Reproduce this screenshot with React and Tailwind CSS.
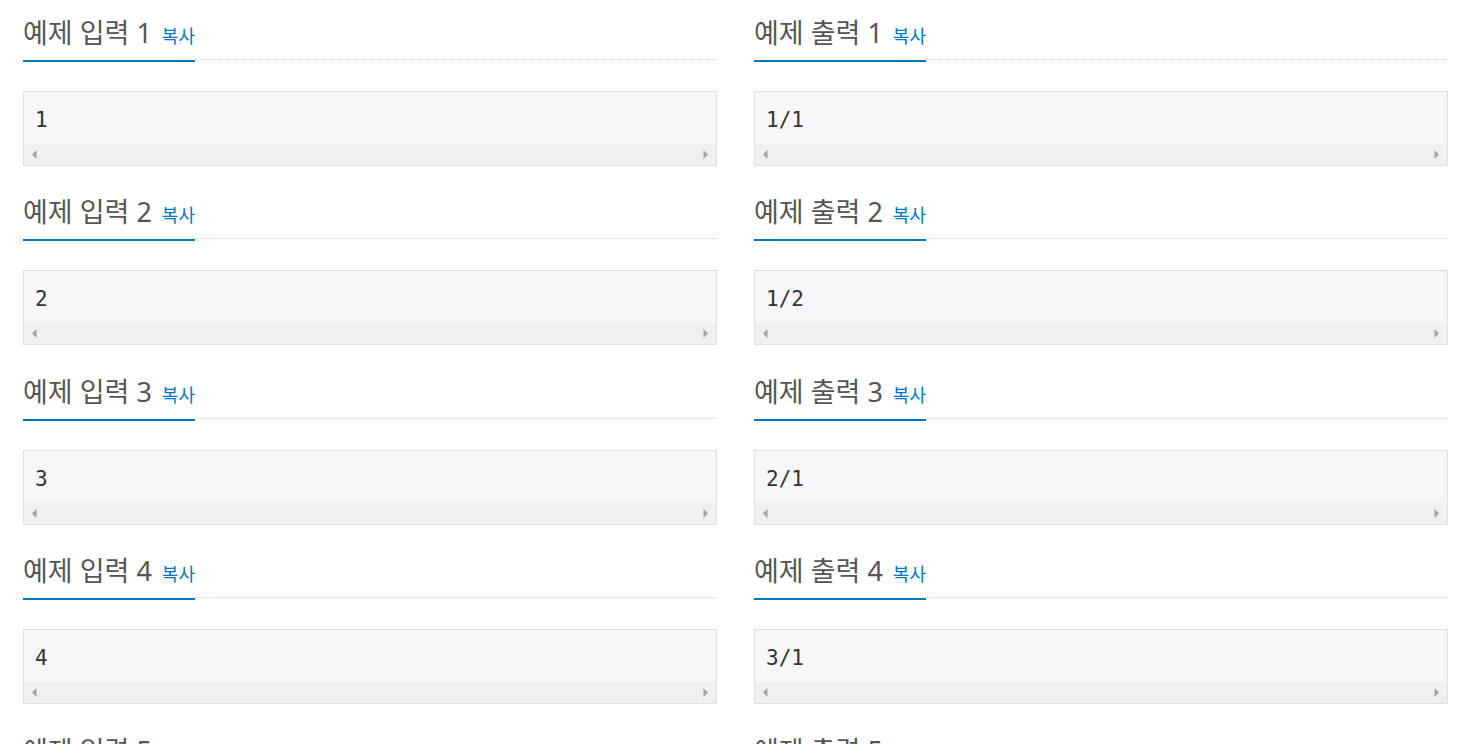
import React from "react";

const samples = [
  { n: 1, input: "1", output: "1/1" },
  { n: 2, input: "2", output: "1/2" },
  { n: 3, input: "3", output: "2/1" },
  { n: 4, input: "4", output: "3/1" },
  { n: 5, input: "5", output: "2/2" },
];

const Headline = ({ title }) => (
  <div className="flex items-end">
    <h2 className="pt-[15px] pb-[9px] border-b-2 border-[#0076c0] text-[27px] leading-[36px] text-[#555] font-normal whitespace-nowrap">
      {title}
      <a className="ml-[10px] text-[18px] leading-none text-[#0076c0] cursor-pointer">복사</a>
    </h2>
    <div className="flex-1 mb-[2px] border-b border-dotted border-[#d5d5d5]" />
  </div>
);

// fake horizontal scrollbar under the sample
const ScrollBar = () => (
  <div className="h-[21px] bg-[#f0f0f0] flex items-center justify-between px-[8px]">
    <svg width="5" height="9" viewBox="0 0 5 9">
      <path d="M4.5 0 L0 4.5 L4.5 9 Z" fill="#a3a3a3" />
    </svg>
    <svg width="5" height="9" viewBox="0 0 5 9">
      <path d="M0.5 0 L5 4.5 L0.5 9 Z" fill="#a3a3a3" />
    </svg>
  </div>
);

const Sample = ({ title, text }) => (
  <div className="w-[694px]">
    <Headline title={title} />
    <div className="mt-[29px] border border-[#dedee3] bg-[#f7f7f9]">
      <pre
        className="px-[11px] pt-[14px] pb-[10px] text-[21px] leading-[28px] text-[#333]"
        style={{ fontFamily: '"DejaVu Sans Mono", monospace' }}
      >
        {text}
      </pre>
      <ScrollBar />
    </div>
  </div>
);

export default function App() {
  return (
    <div
      className="w-full h-[744px] overflow-hidden bg-white pl-[23px]"
      style={{ fontFamily: '"Noto Sans", "Noto Sans CJK KR", sans-serif' }}
    >
      {samples.map((s) => (
        <div key={s.n} className="flex gap-[37px] mb-[13.4px]">
          <Sample title={`예제 입력 ${s.n}`} text={s.input} />
          <Sample title={`예제 출력 ${s.n}`} text={s.output} />
        </div>
      ))}
    </div>
  );
}
